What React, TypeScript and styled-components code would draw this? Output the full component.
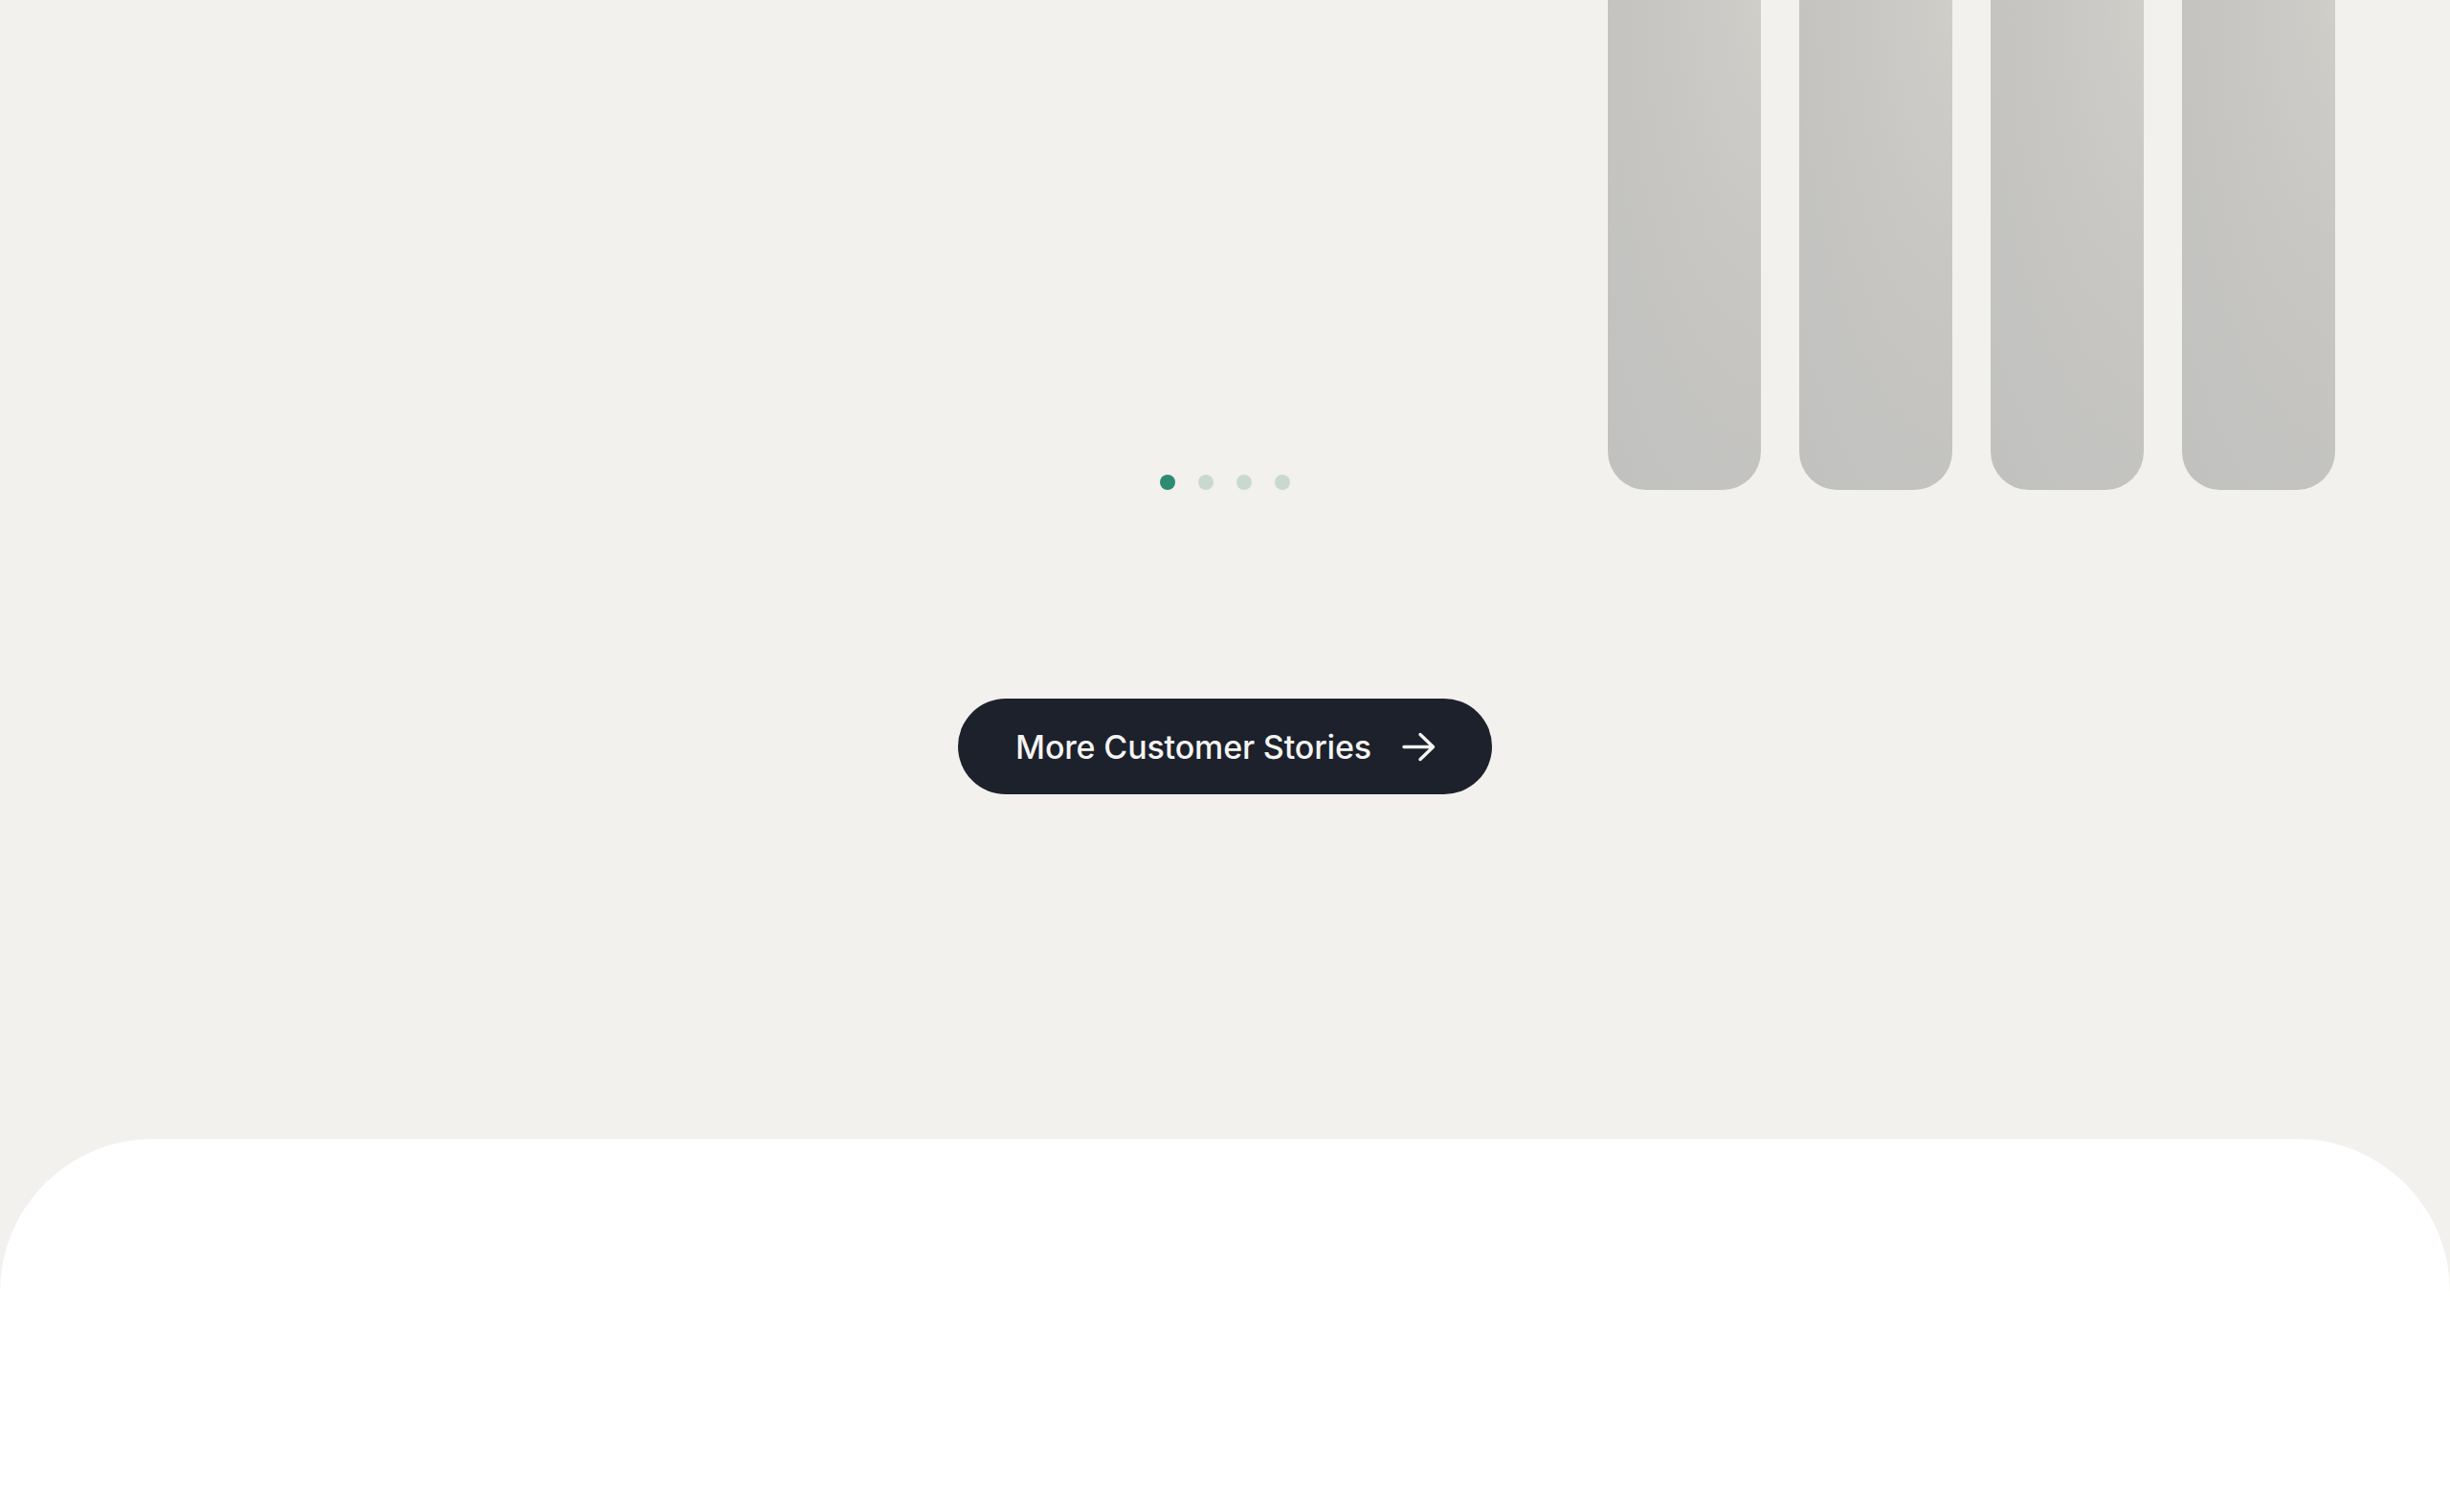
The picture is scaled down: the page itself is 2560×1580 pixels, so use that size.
import React from "react";
import styled, { createGlobalStyle } from "styled-components";

const GlobalStyle = createGlobalStyle`
  html, body {
    margin: 0;
    padding: 0;
    background: #f2f1ed;
    font-family: Inter, "Noto Sans", "Liberation Sans", sans-serif;
  }
  #root {
    min-height: 1580px;
  }
  * { box-sizing: border-box; }
`;

const Page = styled.div`
  width: 2560px;
  min-height: 1580px;
  background: #f2f1ed;
  display: flex;
  flex-direction: column;
  overflow: hidden;
`;

const Carousel = styled.section`
  display: grid;
  grid-template-areas: "stack";
  height: 512px;
  padding-right: 120px;
`;

const Track = styled.div`
  grid-area: stack;
  justify-self: end;
  display: flex;
  gap: 40px;
  height: 512px;
`;

const Slide = styled.div`
  width: 160px;
  height: 512px;
  border-radius: 0 0 40px 40px;
  background: radial-gradient(220px 640px at 100% 0%, #cfcec9 0%, #c8c7c4 40%, #c1c1bf 100%);
`;

const Dots = styled.div`
  grid-area: stack;
  align-self: end;
  justify-self: center;
  display: flex;
  gap: 24px;
  margin-left: 120px;
`;

const Dot = styled.span<{ $active?: boolean }>`
  width: 16px;
  height: 16px;
  border-radius: 50%;
  background: ${(p) => (p.$active ? "#2e8a70" : "#c9d9d1")};
`;

const ButtonRow = styled.div`
  display: flex;
  justify-content: center;
  margin-top: 218px;
`;

const StoriesButton = styled.a`
  display: inline-flex;
  align-items: center;
  gap: 32px;
  height: 100px;
  padding: 0 59px 0 60px;
  border-radius: 50px;
  background: #1d212b;
  color: #f4f4f2;
  font-family: Inter, "Noto Sans", sans-serif;
  font-size: 34px;
  font-weight: 450;
  letter-spacing: -0.15px;
  text-decoration: none;
  cursor: pointer;
`;

const ArrowIcon = styled.svg`
  width: 35px;
  height: 31px;
  flex: none;
`;

const Footer = styled.section`
  margin-top: 360px;
  height: 391px;
  background: #ffffff;
  border-radius: 160px 160px 0 0;
`;

export default function App() {
  return (
    <>
      <GlobalStyle />
      <Page>
        <Carousel>
          <Track>
            {[0, 1, 2, 3].map((i) => (
              <Slide key={i} />
            ))}
          </Track>
          <Dots>
            {[0, 1, 2, 3].map((i) => (
              <Dot key={i} $active={i === 0} />
            ))}
          </Dots>
        </Carousel>
        <ButtonRow>
          <StoriesButton>
            More Customer Stories
            <ArrowIcon viewBox="0 0 35 31" fill="none">
              <path
                d="M2 15.5H32.5M19 2.5L32.5 15.5L19 28.5"
                stroke="#f4f4f2"
                strokeWidth="3.4"
                strokeLinecap="round"
                strokeLinejoin="round"
              />
            </ArrowIcon>
          </StoriesButton>
        </ButtonRow>
        <Footer />
      </Page>
    </>
  );
}
